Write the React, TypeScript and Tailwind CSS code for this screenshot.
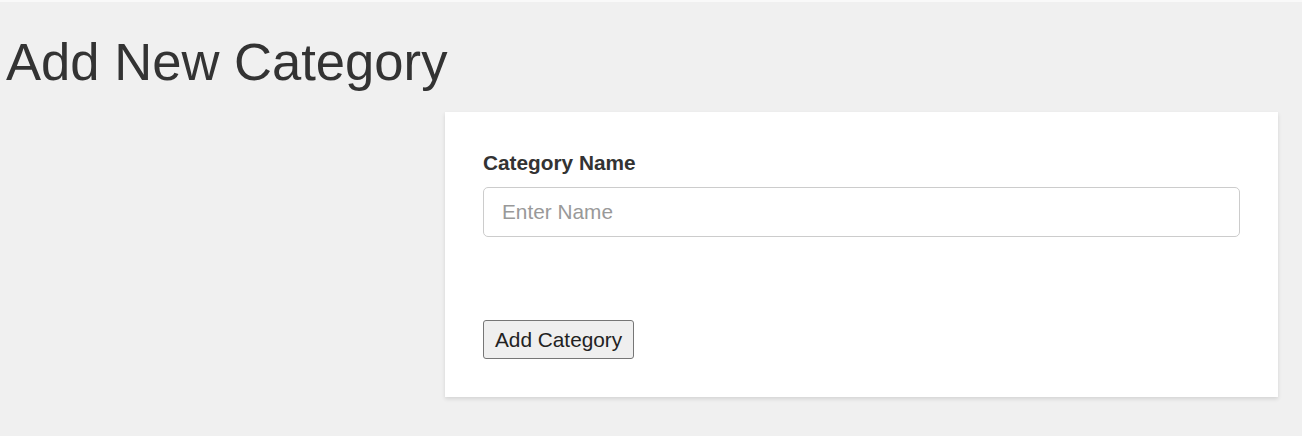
export default function App() {
  return (
    <div className="h-[436px] w-[1302px] overflow-hidden bg-[#f0f0f0] font-['Liberation_Sans',Arial,sans-serif] text-[#333]">
      <div className="h-[2px] bg-[#f9f9f9]" />
      <h1 className="mt-[29px] pl-[6px] text-[52.6px] font-normal leading-[61px]">Add New Category</h1>
      <div className="mt-[20px] flex pl-[445px]">
        <form
          className="w-[833px] bg-white px-[38px] pt-[39px] pb-[38px] shadow-[0_2px_4px_rgba(0,0,0,0.12)]"
          onSubmit={(e) => e.preventDefault()}
        >
          <label className="block text-[20.8px] font-bold leading-[24px]">Category Name</label>
          <input
            type="text"
            placeholder="Enter Name"
            className="mt-[12px] block h-[50px] w-full rounded-[5px] border border-[#ccc] px-[18px] text-[20.8px] outline-none placeholder:text-[#999]"
          />
          <button
            type="submit"
            className="mt-[83px] block h-[39px] rounded-[3px] border border-[#767676] bg-[#efefef] px-[11px] text-[20.8px] leading-[24px] text-[#222]"
          >
            Add Category
          </button>
        </form>
      </div>
    </div>
  );
}
